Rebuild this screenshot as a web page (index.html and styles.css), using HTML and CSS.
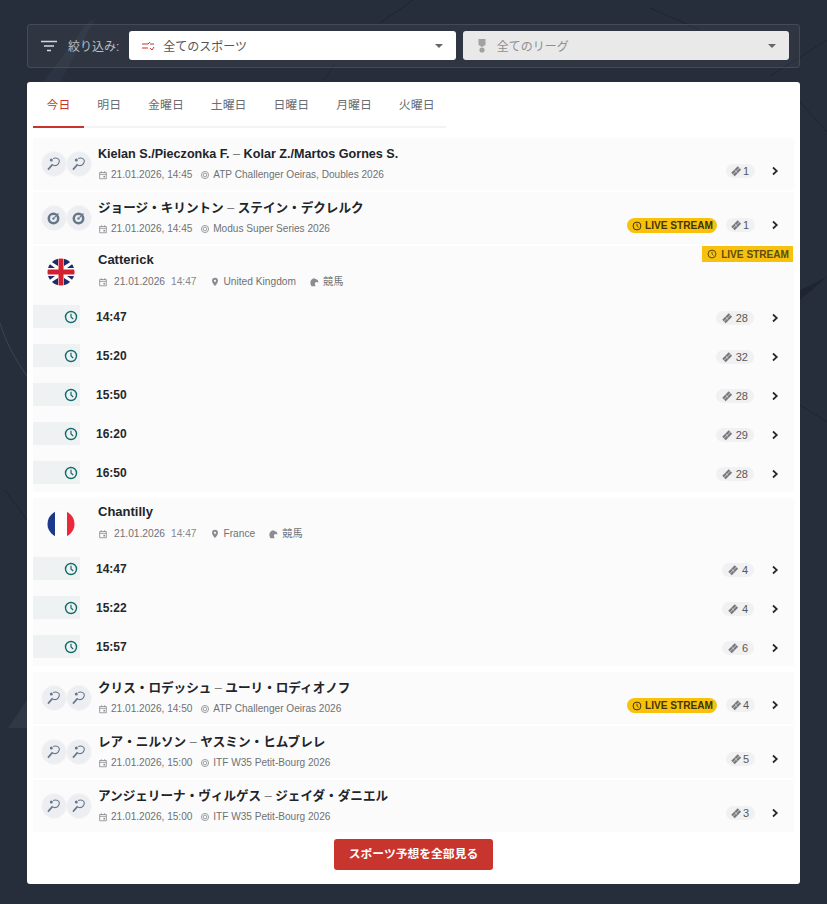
FILE: index.html
```html
<!DOCTYPE html>
<html lang="ja">
<head>
<meta charset="UTF-8" />
<meta name="viewport" content="width=device-width, initial-scale=1" />
<title>スポーツ予想</title>
<link rel="stylesheet" href="styles.css">
</head>
<body>
  <svg class="bg-lines" width="827" height="904" viewBox="0 0 827 904" aria-hidden="true">
    <path d="M43 82 L88 22 L96 18 L60 82 Z" fill="#2c3342" />
    <path d="M380 23 L413 0 M322 82 L334 65 M650 8 L700 30 M770 76 L827 40 M800 102 L827 132 M5 490 L27 520 M800 405 L827 422" stroke="#1f2530" fill="none" />
    <path d="M0 323 Q8 350 27 376" stroke="#3c4452" fill="none" />
    <path d="M800 300 L827 277 L800 290 Z" fill="#1f2530" />
    <path d="M8 728 L27 700 V728 Z" fill="#303745" />
  </svg>

  <svg class="defs" width="0" height="0" aria-hidden="true">
    <symbol id="i-racket" viewBox="0 0 16 16"><g fill="none" stroke="currentColor" stroke-width="1.100"><path d="M7.200 2.600c2.200-1.200 5.400-.4 6 1.600.7 2.500-1.600 5.400-4.300 5.400-1.100 0-2-.5-2.400-1.200" /><path d="M6.600 8.400 2 13.600" stroke-width="1.600" /></g><circle cx="5.300" cy="3.900" r="1.500" fill="currentColor" /></symbol>
    <symbol id="i-target" viewBox="0 0 16 16"><circle cx="7.500" cy="8.500" r="4.700" fill="none" stroke="currentColor" stroke-width="2.500" /><circle cx="7.500" cy="8.500" r="1.200" fill="currentColor" /><path d="M8.500 7.500 12.500 3.500" stroke="currentColor" stroke-width="1.100" /></symbol>
    <symbol id="i-cal" viewBox="0 0 12 12"><path d="M2 3h8v7.500H2zM2 5.200h8M4 1.500v2M8 1.500v2" fill="none" stroke="currentColor" /><rect x="6.500" y="7" width="2" height="2" fill="currentColor" /></symbol>
    <symbol id="i-league" viewBox="0 0 12 12"><circle cx="6" cy="6" r="4.300" fill="none" stroke="currentColor" /><circle cx="6" cy="6" r="2.200" fill="none" stroke="currentColor" /></symbol>
    <symbol id="i-ticket" viewBox="0 0 14 14"><path d="M9 1.500 13 5.500 5.500 13 1.500 9Z" fill="currentColor" /><path d="M3.500 11 11 3.500M5.500 6 8.500 9" stroke="#f1f1f2" stroke-width=".8" /></symbol>
    <symbol id="i-chev" viewBox="0 0 10 10"><path d="M3 1.500 6.800 5 3 8.500" fill="none" stroke="currentColor" stroke-width="1.700" /></symbol>
    <symbol id="i-clock" viewBox="0 0 14 14"><circle cx="7" cy="7" r="5.500" fill="none" stroke="currentColor" stroke-width="1.400" /><path d="M7 3.800V7l2.200 2" fill="none" stroke="currentColor" stroke-width="1.200" /></symbol>
    <symbol id="i-pin" viewBox="0 0 12 12"><path d="M6 1a3.600 3.600 0 0 0-3.600 3.600C2.400 7.200 6 11 6 11s3.600-3.800 3.600-6.400A3.600 3.600 0 0 0 6 1Zm0 4.900a1.300 1.300 0 1 1 0-2.600 1.300 1.300 0 0 1 0 2.600Z" fill="currentColor" /></symbol>
    <symbol id="i-horse" viewBox="0 0 12 12"><path d="M3 11C.5 7.500 1.500 2.500 6 1.500l4.500 2L11.500 6.500 8.500 6 7 7.500l.8 3.500Z" fill="currentColor" /></symbol>
  </svg>

  <main class="page">
    <form class="filter-bar">
      <svg class="filter-icon" width="18" height="14" viewBox="0 0 18 14"><path d="M1 2.500h16M4 7h10M7 11.500h4" stroke="#d5d8dd" stroke-width="1.600" fill="none" /></svg>
      <span class="filter-label">絞り込み:</span>
      <div class="select">
        <svg class="select-icon" width="14" height="12" viewBox="0 0 14 12"><path d="M1 4h6l2-2M1 8h6M9 4h4M9 8l2 2 2-3" stroke="#c8332c" fill="none" /></svg>
        <span class="select-text">全てのスポーツ</span>
        <i class="caret"></i>
      </div>
      <div class="select select-off">
        <svg class="select-icon" width="14" height="16" viewBox="0 0 14 16"><path d="M3.500 1h7v6l-3.500 2-3.500-2Z" fill="#a2a2a2" /><circle cx="7" cy="12" r="2.600" fill="#a2a2a2" /></svg>
        <span class="select-text">全てのリーグ</span>
        <i class="caret"></i>
      </div>
    </form>

    <section class="panel">
      <nav class="tabs">
        <a class="tab active">今日</a>
        <a class="tab">明日</a>
        <a class="tab">金曜日</a>
        <a class="tab">土曜日</a>
        <a class="tab">日曜日</a>
        <a class="tab">月曜日</a>
        <a class="tab">火曜日</a>
      </nav>

      <div class="list">
        <article class="match">
          <div class="sport-icons">
            <span class="sport"><svg><use href="#i-racket" /></svg></span>
            <span class="sport"><svg><use href="#i-racket" /></svg></span>
          </div>
          <div class="match-info">
            <h3 class="match-title">Kielan S./Pieczonka F. <em>–</em> Kolar Z./Martos Gornes S.</h3>
            <p class="meta"><svg class="m-icon"><use href="#i-cal" /></svg>21.01.2026, 14:45 <svg class="m-icon m-gap"><use href="#i-league" /></svg>ATP Challenger Oeiras, Doubles 2026</p>
          </div>
          <div class="match-side">
            <span class="tips"><svg><use href="#i-ticket" /></svg>1</span>
            <svg class="chev"><use href="#i-chev" /></svg>
          </div>
        </article>

        <article class="match">
          <div class="sport-icons">
            <span class="sport"><svg><use href="#i-target" /></svg></span>
            <span class="sport"><svg><use href="#i-target" /></svg></span>
          </div>
          <div class="match-info">
            <h3 class="match-title">ジョージ・キリントン <em>–</em> ステイン・デクレルク</h3>
            <p class="meta"><svg class="m-icon"><use href="#i-cal" /></svg>21.01.2026, 14:45 <svg class="m-icon m-gap"><use href="#i-league" /></svg>Modus Super Series 2026</p>
          </div>
          <div class="match-side">
            <span class="live"><svg><use href="#i-clock" /></svg>LIVE STREAM</span>
            <span class="tips"><svg><use href="#i-ticket" /></svg>1</span>
            <svg class="chev"><use href="#i-chev" /></svg>
          </div>
        </article>

        <article class="race-group">
          <span class="live live-corner"><svg><use href="#i-clock" /></svg>LIVE STREAM</span>
          <header class="race-head">
            <svg class="flag" viewBox="0 0 28 28">
              <clipPath id="c1"><circle cx="14" cy="14" r="13.500" /></clipPath>
              <g clip-path="url(#c1)">
                <rect width="28" height="28" fill="#fff" />
                <path d="M0 1 11 8V0H5ZM28 1 17 8V0H23ZM0 27 11 20V28H5ZM28 27 17 20V28H23Z" fill="#1d2a6b" />
                <path d="M0 4 8 10H0ZM28 4 20 10H28ZM0 24 8 18H0ZM28 24 20 18H28Z" fill="#1d2a6b" />
                <path d="M11.500 0H16.500V11.500H28V16.500H16.500V28H11.500V16.500H0V11.500H11.500Z" fill="#d3202f" />
              </g>
            </svg>
            <div class="race-info">
              <h3 class="race-title">Catterick</h3>
              <p class="race-meta"><svg class="m-icon"><use href="#i-cal" /></svg><span class="d">21.01.2026</span><span class="t">14:47</span><svg class="m-icon m-tight"><use href="#i-pin" /></svg><span class="d">United Kingdom</span><svg class="m-icon m-tight"><use href="#i-horse" /></svg><span>競馬</span></p>
            </div>
          </header>
          <div class="race"><span class="stub"><svg><use href="#i-clock" /></svg></span><b class="race-time">14:47</b><span class="tips"><svg><use href="#i-ticket" /></svg>28</span><svg class="chev"><use href="#i-chev" /></svg></div>
          <div class="race"><span class="stub"><svg><use href="#i-clock" /></svg></span><b class="race-time">15:20</b><span class="tips"><svg><use href="#i-ticket" /></svg>32</span><svg class="chev"><use href="#i-chev" /></svg></div>
          <div class="race"><span class="stub"><svg><use href="#i-clock" /></svg></span><b class="race-time">15:50</b><span class="tips"><svg><use href="#i-ticket" /></svg>28</span><svg class="chev"><use href="#i-chev" /></svg></div>
          <div class="race"><span class="stub"><svg><use href="#i-clock" /></svg></span><b class="race-time">16:20</b><span class="tips"><svg><use href="#i-ticket" /></svg>29</span><svg class="chev"><use href="#i-chev" /></svg></div>
          <div class="race"><span class="stub"><svg><use href="#i-clock" /></svg></span><b class="race-time">16:50</b><span class="tips"><svg><use href="#i-ticket" /></svg>28</span><svg class="chev"><use href="#i-chev" /></svg></div>
        </article>

        <article class="race-group">
          <header class="race-head">
            <svg class="flag" viewBox="0 0 28 28">
              <clipPath id="c2"><circle cx="14" cy="14" r="13.500" /></clipPath>
              <g clip-path="url(#c2)">
                <rect width="28" height="28" fill="#fff" />
                <rect width="8" height="28" fill="#1c3a8c" />
                <rect x="20" width="8" height="28" fill="#ea2a3c" />
              </g>
            </svg>
            <div class="race-info">
              <h3 class="race-title">Chantilly</h3>
              <p class="race-meta"><svg class="m-icon"><use href="#i-cal" /></svg><span class="d">21.01.2026</span><span class="t">14:47</span><svg class="m-icon m-tight"><use href="#i-pin" /></svg><span class="d">France</span><svg class="m-icon m-tight"><use href="#i-horse" /></svg><span>競馬</span></p>
            </div>
          </header>
          <div class="race"><span class="stub"><svg><use href="#i-clock" /></svg></span><b class="race-time">14:47</b><span class="tips"><svg><use href="#i-ticket" /></svg>4</span><svg class="chev"><use href="#i-chev" /></svg></div>
          <div class="race"><span class="stub"><svg><use href="#i-clock" /></svg></span><b class="race-time">15:22</b><span class="tips"><svg><use href="#i-ticket" /></svg>4</span><svg class="chev"><use href="#i-chev" /></svg></div>
          <div class="race"><span class="stub"><svg><use href="#i-clock" /></svg></span><b class="race-time">15:57</b><span class="tips"><svg><use href="#i-ticket" /></svg>6</span><svg class="chev"><use href="#i-chev" /></svg></div>
        </article>

        <article class="match">
          <div class="sport-icons">
            <span class="sport"><svg><use href="#i-racket" /></svg></span>
            <span class="sport"><svg><use href="#i-racket" /></svg></span>
          </div>
          <div class="match-info">
            <h3 class="match-title">クリス・ロデッシュ <em>–</em> ユーリ・ロディオノフ</h3>
            <p class="meta"><svg class="m-icon"><use href="#i-cal" /></svg>21.01.2026, 14:50 <svg class="m-icon m-gap"><use href="#i-league" /></svg>ATP Challenger Oeiras 2026</p>
          </div>
          <div class="match-side">
            <span class="live"><svg><use href="#i-clock" /></svg>LIVE STREAM</span>
            <span class="tips"><svg><use href="#i-ticket" /></svg>4</span>
            <svg class="chev"><use href="#i-chev" /></svg>
          </div>
        </article>

        <article class="match">
          <div class="sport-icons">
            <span class="sport"><svg><use href="#i-racket" /></svg></span>
            <span class="sport"><svg><use href="#i-racket" /></svg></span>
          </div>
          <div class="match-info">
            <h3 class="match-title">レア・ニルソン <em>–</em> ヤスミン・ヒムブレレ</h3>
            <p class="meta"><svg class="m-icon"><use href="#i-cal" /></svg>21.01.2026, 15:00 <svg class="m-icon m-gap"><use href="#i-league" /></svg>ITF W35 Petit-Bourg 2026</p>
          </div>
          <div class="match-side">
            <span class="tips"><svg><use href="#i-ticket" /></svg>5</span>
            <svg class="chev"><use href="#i-chev" /></svg>
          </div>
        </article>

        <article class="match">
          <div class="sport-icons">
            <span class="sport"><svg><use href="#i-racket" /></svg></span>
            <span class="sport"><svg><use href="#i-racket" /></svg></span>
          </div>
          <div class="match-info">
            <h3 class="match-title">アンジェリーナ・ヴィルゲス <em>–</em> ジェイダ・ダニエル</h3>
            <p class="meta"><svg class="m-icon"><use href="#i-cal" /></svg>21.01.2026, 15:00 <svg class="m-icon m-gap"><use href="#i-league" /></svg>ITF W35 Petit-Bourg 2026</p>
          </div>
          <div class="match-side">
            <span class="tips"><svg><use href="#i-ticket" /></svg>3</span>
            <svg class="chev"><use href="#i-chev" /></svg>
          </div>
        </article>
      </div>

      <div class="more">
        <a class="more-btn">スポーツ予想を全部見る</a>
      </div>
    </section>
  </main>
</body>
</html>
```

FILE: styles.css
```css
* {
  box-sizing: border-box;
}
html, body {
  height: 904px;
  overflow: hidden;
}
body {
  margin: 0;
  background: #272e3b;
  color: #1f2227;
  font-family: "Liberation Sans", "Noto Sans CJK JP", sans-serif;
  position: relative;
}
h3, p {
  margin: 0;
}
.bg-lines {
  position: absolute;
  top: 0;
  left: 0;
}
.defs {
  position: absolute;
}
.page {
  position: relative;
  padding: 24px 27px 0 27px;
}

/* filter bar */
.filter-bar {
  height: 44px;
  display: flex;
  align-items: center;
  padding: 0 10px 1px 12px;
  background: rgba(255, 255, 255, 0.04);
  border: 1px solid #434a58;
  border-radius: 3px;
}
.filter-icon {
  margin-right: 10px;
}
.filter-label {
  color: #b9bdc4;
  font-size: 12px;
  margin-right: 10px;
  white-space: nowrap;
}
.select {
  flex: 1;
  height: 29px;
  display: flex;
  align-items: center;
  background: #fff;
  border-radius: 3px;
  padding: 0 13px 0 12px;
  color: #555;
  font-size: 12px;
}
.select + .select {
  margin-left: 7px;
}
.select-off {
  background: #e9e9e9;
  color: #8f8f8f;
}
.select-icon {
  margin-right: 8px;
}
.select-text {
  flex: 1;
}
.caret {
  width: 0;
  height: 0;
  border-left: 4.500px solid transparent;
  border-right: 4.500px solid transparent;
  border-top: 4px solid #666;
}

/* main panel */
.panel {
  margin-top: 14px;
  height: 802px;
  background: #fff;
  border-radius: 3px;
  padding: 0 6px;
}
.tabs {
  display: flex;
  width: 413px;
  height: 46px;
  border-bottom: 2px solid #f3f3f3;
}
.tab {
  height: 46px;
  padding: 15px 13.500px 0 13.500px;
  font-size: 11.900px;
  line-height: 17px;
  color: #6a6d72;
  white-space: nowrap;
}
.tab.active {
  color: #c8332c;
  border-bottom: 2px solid #c8332c;
}
.list {
  margin-top: 10px;
  display: flex;
  flex-direction: column;
  gap: 2px;
}

/* match rows */
.match {
  height: 52px;
  display: flex;
  align-items: center;
  background: #fbfbfb;
  padding: 0 14px 0 8px;
}
.sport-icons {
  display: flex;
  width: 57px;
  flex: none;
}
.sport {
  width: 26px;
  height: 26px;
  border-radius: 50%;
  background: #eceef2;
  color: #67778a;
  display: flex;
  align-items: center;
  justify-content: center;
  border: 1px solid #f6f6f8;
}
.sport + .sport {
  margin-left: -1.500px;
}
.sport svg {
  width: 16px;
  height: 16px;
}
.match-info {
  flex: 1;
  min-width: 0;
  padding-bottom: 2px;
}
.match-title {
  font-size: 12.600px;
  line-height: 18px;
  font-weight: 700;
  color: #212429;
}
.match-title em {
  font-style: normal;
  font-weight: 400;
  color: #777;
}
.meta {
  margin-top: 5px;
  font-size: 10.100px;
  line-height: 13px;
  color: #6e7175;
}
.m-icon {
  width: 10px;
  height: 10px;
  color: #8a8d91;
  margin-right: 3px;
  vertical-align: -1.500px;
}
.m-gap {
  margin-left: 5px;
}
.match-side {
  display: flex;
  align-items: center;
  align-self: flex-end;
  margin-bottom: 12px;
}
.tips {
  height: 14px;
  padding: 0 6px 0 4px;
  border-radius: 7px;
  background: #f1f1f2;
  color: #55585c;
  font-size: 11px;
  line-height: 14px;
  display: inline-flex;
  align-items: center;
  gap: 1px;
}
.tips svg {
  width: 12px;
  height: 12px;
  color: #75787c;
}
.chev {
  width: 10px;
  height: 10px;
  margin-left: 15px;
  color: #24272c;
}
.live {
  height: 15px;
  display: inline-flex;
  align-items: center;
  gap: 3px;
  padding: 0 4px 0 5px;
  border-radius: 8px;
  background: #f8c10d;
  color: #42350a;
  font-size: 10.100px;
  font-weight: 700;
  margin: 1px 9px -1px 0;
}
.live svg {
  width: 10px;
  height: 10px;
}

/* race groups */
.race-group {
  position: relative;
  background: #fbfbfb;
  margin-bottom: 4px;
}
.live-corner {
  position: absolute;
  top: 0;
  right: 1px;
  margin: 0;
  height: 16px;
  border-radius: 0;
  gap: 4px;
  color: #5c4c10;
}
.race-head {
  height: 51px;
  display: flex;
  align-items: center;
  padding-left: 14px;
}
.flag {
  width: 28px;
  height: 28px;
  margin-right: 23px;
}
.race-info {
  align-self: flex-start;
  padding-top: 5px;
}
.race-title {
  font-size: 13px;
  line-height: 18px;
  font-weight: 700;
  color: #212429;
}
.race-meta {
  margin-top: 6px;
  display: flex;
  align-items: center;
  font-size: 10.200px;
  line-height: 13px;
  color: #6e7175;
}
.race-meta .m-icon {
  margin-right: 6px;
}
.race-meta .m-tight {
  margin-right: 4px;
}
.race-meta .d {
  margin-right: 13px;
}
.race-meta .t {
  margin: 0 13px 0 -7px;
  color: #888;
}
.race {
  height: 39px;
  display: flex;
  align-items: center;
  padding-right: 14px;
}
.race .tips {
  margin-top: 3px;
  padding-left: 5px;
  gap: 3px;
}
.race .chev {
  margin-top: 3px;
  margin-left: 16px;
}
.stub {
  width: 47px;
  height: 23px;
  background: #eff2f3;
  color: #136a6a;
  display: flex;
  align-items: center;
  justify-content: flex-end;
  padding-right: 2px;
  margin-right: 16px;
}
.stub svg {
  width: 14px;
  height: 14px;
}
.race-time {
  flex: 1;
  font-size: 12px;
  color: #24272c;
}

.more {
  display: flex;
  justify-content: center;
  margin-top: 7px;
}
.more-btn {
  width: 159px;
  height: 31px;
  line-height: 31px;
  text-align: center;
  background: #c8352e;
  color: #fff;
  font-size: 11.800px;
  font-weight: 700;
  border-radius: 3px;
}
```
